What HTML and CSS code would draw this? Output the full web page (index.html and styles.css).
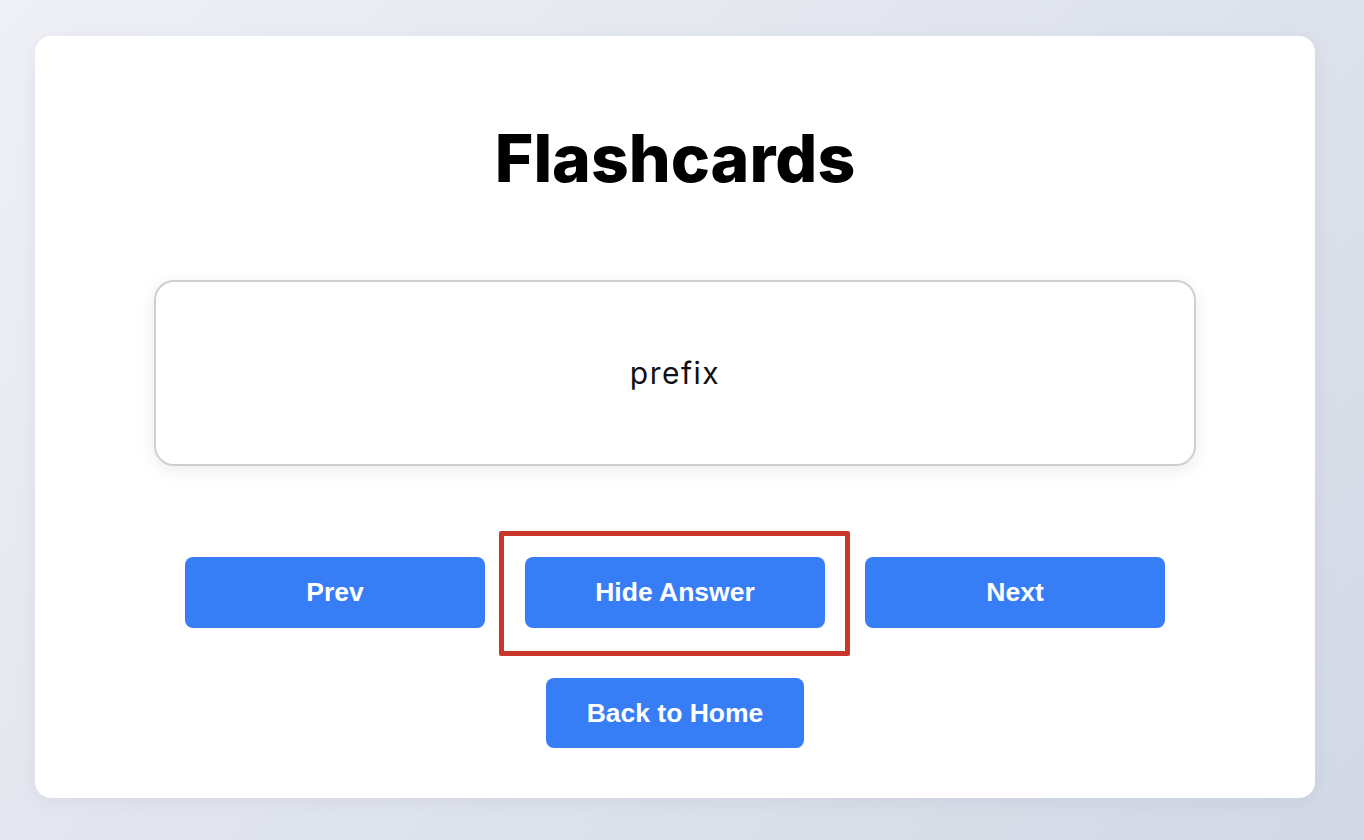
FILE: index.html
```html
<!DOCTYPE html>
<html lang="en">
<head>
<meta charset="utf-8">
<title>Flashcards</title>
<link rel="stylesheet" href="styles.css">
</head>
<body>
<main class="panel">
  <h1 class="title">Flashcards</h1>
  <div class="card">
    <p class="card-text">prefix</p>
  </div>
  <div class="controls">
    <button class="btn">Prev</button>
    <span class="highlight"><button class="btn">Hide Answer</button></span>
    <button class="btn">Next</button>
  </div>
  <div class="home-row">
    <button class="btn btn-home">Back to Home</button>
  </div>
</main>
</body>
</html>
```

FILE: styles.css
```css
* { box-sizing: border-box; }
html, body { height: 100%; }
body {
  margin: 0;
  background: linear-gradient(135deg, #eef0f5 0%, #d2d8e5 100%);
  font-family: "Inter", "Liberation Sans", sans-serif;
  padding: 36px 0 0 35px;
}
.panel {
  width: 1280px;
  height: 762px;
  background: #fff;
  border-radius: 16px;
  box-shadow: 0 4px 20px rgba(40, 50, 80, 0.06);
  display: flex;
  flex-direction: column;
  align-items: center;
  padding: 0 119px;
}
.title {
  margin: 82px 0 0;
  font-family: "Inter", sans-serif;
  font-weight: 800;
  font-size: 66px;
  line-height: 80px;
  color: #000;
}
.card {
  margin-top: 82px;
  width: 100%;
  height: 186px;
  border: 2px solid #cfcfcf;
  border-radius: 20px;
  box-shadow: 0 4px 18px rgba(0, 0, 0, 0.08);
  display: flex;
  align-items: center;
  justify-content: center;
}
.card-text {
  margin: 0;
  font-family: "Inter", sans-serif;
  font-size: 30px;
  letter-spacing: 1.5px;
  font-weight: 400;
  color: #111;
}
.controls {
  margin-top: 91px;
  display: flex;
  gap: 40px;
}
.btn {
  width: 300px;
  height: 71px;
  border: none;
  border-radius: 8px;
  background: #377df6;
  color: #fff;
  font-family: "Liberation Sans", Arial, sans-serif;
  font-weight: 700;
  font-size: 26.5px;
  cursor: pointer;
}
.highlight {
  position: relative;
  display: block;
}
.highlight::after {
  content: "";
  position: absolute;
  left: -26px;
  right: -25px;
  top: -26px;
  bottom: -28px;
  border: 5px solid #c8372a;
  border-radius: 2px;
  pointer-events: none;
}
.home-row {
  margin-top: 50px;
}
.btn-home {
  width: 258px;
  height: 70px;
}
```
